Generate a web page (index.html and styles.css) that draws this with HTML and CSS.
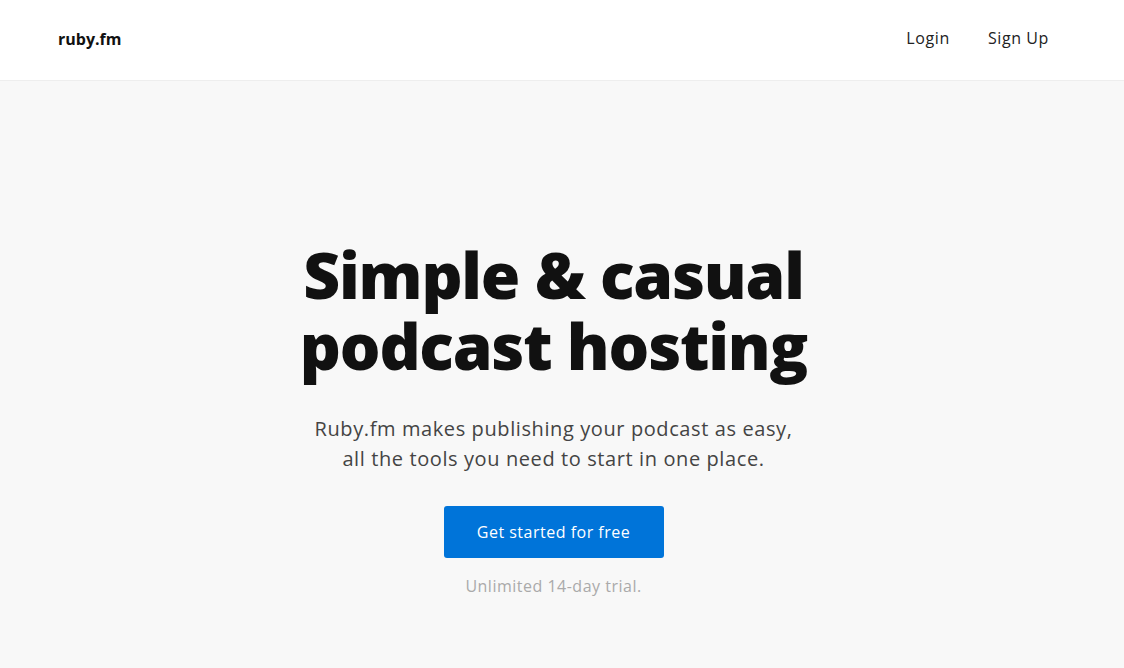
FILE: index.html
```html
<!DOCTYPE html>
<html lang="en">
<head>
<meta charset="utf-8">
<title>ruby.fm</title>
<link rel="stylesheet" href="styles.css">
</head>
<body>
<header class="site-header">
  <a class="logo" href="#">ruby.fm</a>
  <nav class="nav">
    <a class="nav-link" href="#">Login</a>
    <a class="nav-link" href="#">Sign Up</a>
  </nav>
</header>
<main class="hero">
  <h1 class="hero-title">Simple &amp; casual<br>podcast hosting</h1>
  <p class="hero-text">Ruby.fm makes publishing your podcast as easy,<br>all the tools you need to start in one place.</p>
  <a class="btn-primary" href="#">Get started for free</a>
  <p class="hero-note">Unlimited 14-day trial.</p>
</main>
</body>
</html>
```
FILE: styles.css
```css
* { box-sizing: border-box; }
html, body { margin: 0; padding: 0; height: 100%; }
body {
  font-family: "Open Sans", "Liberation Sans", sans-serif;
  background: #f8f8f8;
  color: #111;
}
a { text-decoration: none; color: inherit; }
.site-header {
  height: 81px;
  background: #fff;
  border-bottom: 1px solid #eeeeee;
  display: flex;
  align-items: center;
  justify-content: space-between;
  padding: 0 56px 0 58px;
}
.logo {
  font-family: "Open Sans", sans-serif;
  font-weight: 700;
  font-size: 16px;
  color: #111;
  margin-top: -3px;
}
.nav { display: flex; margin-top: -4px; }
.nav-link {
  font-size: 16px;
  color: #222;
  padding: 0 19px;
  letter-spacing: 0.6px;
}
.hero {
  display: flex;
  flex-direction: column;
  align-items: center;
  text-align: center;
  padding: 158px 17px 0 0;
}
.hero-title {
  margin: 0;
  font-size: 64px;
  line-height: 71px;
  font-weight: 800;
  color: #111;
  letter-spacing: -1.2px;
}
.hero-text {
  margin: 33px 0 0;
  font-size: 20px;
  line-height: 30px;
  color: #444;
  letter-spacing: 0.6px;
}
.btn-primary {
  margin-top: 32px;
  width: 220px;
  height: 52px;
  display: flex;
  align-items: center;
  justify-content: center;
  background: #0074d9;
  color: #fff;
  border-radius: 3px;
  font-size: 16px;
  letter-spacing: 0.5px;
}
.hero-note {
  margin: 17px 0 0;
  font-size: 16px;
  color: #aaaaaa;
  letter-spacing: 0.5px;
}
```
